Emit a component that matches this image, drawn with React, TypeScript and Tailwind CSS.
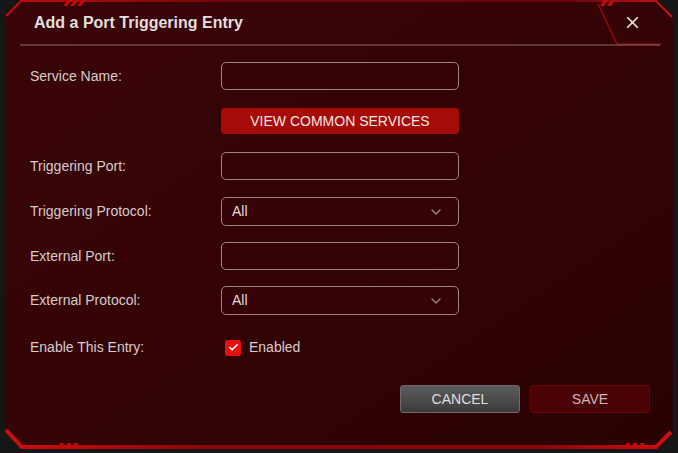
import React from 'react';
import { X, ChevronDown, Check } from 'lucide-react';

const Frame: React.FC = () => (
  <svg className="absolute inset-0 pointer-events-none" width="678" height="453" viewBox="0 0 678 453">
    <defs>
      <linearGradient id="panelBg" x1="0" y1="0" x2="1" y2="1">
        <stop offset="0" stopColor="#3a0407" />
        <stop offset="0.6" stopColor="#320305" />
        <stop offset="1" stopColor="#2a0204" />
      </linearGradient>
      <linearGradient id="topEdge" x1="0" y1="0" x2="1" y2="0">
        <stop offset="0" stopColor="#c20c0c" />
        <stop offset="0.35" stopColor="#6a0608" />
        <stop offset="0.85" stopColor="#6a0608" />
        <stop offset="1" stopColor="#d01010" />
      </linearGradient>
      <linearGradient id="botEdge" x1="0" y1="0" x2="1" y2="0">
        <stop offset="0" stopColor="#d00e0e" />
        <stop offset="0.3" stopColor="#8a0709" />
        <stop offset="0.8" stopColor="#8a0709" />
        <stop offset="1" stopColor="#d00e0e" />
      </linearGradient>
      <linearGradient id="sideEdge" x1="0" y1="0" x2="0" y2="1">
        <stop offset="0" stopColor="#5a0507" />
        <stop offset="0.8" stopColor="#5a0507" />
        <stop offset="1" stopColor="#c00c0c" />
      </linearGradient>
    </defs>
    <polygon points="20,0 656,0 673,17 673,432 657,449 22,449 5,432 5,15" fill="url(#panelBg)" />
    {/* side edges */}
    <line x1="6" y1="16" x2="6" y2="432" stroke="url(#sideEdge)" strokeWidth="2" />
    <line x1="672" y1="17" x2="672" y2="432" stroke="url(#sideEdge)" strokeWidth="2" />
    {/* top edge */}
    <polyline points="6,16 21,1 656,1 672,17" fill="none" stroke="url(#topEdge)" strokeWidth="2" />
    {/* bottom edge */}
    <polyline points="6,430 22,447 656,447 671,432" fill="none" stroke="url(#botEdge)" strokeWidth="4" />
    {/* stripes */}
    <g fill="#c20c0c">
      <polygon points="63,6 67,6 72,0 68,0" />
      <polygon points="70,6 74,6 79,0 75,0" />
      <polygon points="77,6 81,6 86,0 82,0" />
      <polygon points="64,449 68,449 63,443 59,443" />
      <polygon points="71,449 75,449 70,443 66,443" />
      <polygon points="78,449 82,449 77,443 73,443" />
      <polygon points="622,449 626,449 631,443 627,443" />
      <polygon points="629,449 633,449 638,443 634,443" />
      <polygon points="636,449 640,449 645,443 641,443" />
      <polygon points="600,6 604,6 608,0 604,0" />
      <polygon points="607,6 611,6 615,0 611,0" />
    </g>
    {/* close tab */}
    <polyline points="598,4 617,44 662,44" fill="none" stroke="#b00a0a" strokeWidth="1.2" />
    <line x1="20" y1="45" x2="617" y2="45" stroke="#8c6464" strokeWidth="1" />
    <line x1="617" y1="45" x2="660" y2="45" stroke="#9a7070" strokeWidth="1" />
  </svg>
);

const Field: React.FC<{ label: string; children: React.ReactNode; mt: string }> = ({ label, children, mt }) => (
  <div className={`flex items-center ${mt}`}>
    <div className="w-[191px] text-[14px] text-[#d6cccc]">{label}</div>
    {children}
  </div>
);

const TextBox: React.FC = () => (
  <div className="w-[238px] h-[28px] rounded-[5px] border border-[#9c8484] bg-[#350305]" />
);

const Select: React.FC = () => (
  <div className="w-[238px] h-[29px] rounded-[5px] border border-[#9c8484] bg-[#350305] flex items-center justify-between pl-[10px] pr-[14px]">
    <span className="text-[14px] text-[#e2dada]">All</span>
    <ChevronDown size={16} strokeWidth={2} className="text-[#9a8a8a]" />
  </div>
);

export default function App() {
  return (
    <div
      className="relative w-[678px] h-[453px] bg-[#161616] overflow-hidden"
      style={{ fontFamily: '"Liberation Sans", Arial, sans-serif' }}
    >
      <Frame />
      <div className="relative flex flex-col">
        {/* Header */}
        <div className="h-[45px] flex items-center justify-between pl-[34px] pr-[36px]">
          <h1 className="text-[16px] font-bold text-[#e4dede]">Add a Port Triggering Entry</h1>
          <X size={19} strokeWidth={2.2} className="text-[#ece6e6]" />
        </div>

        {/* Form */}
        <div className="flex flex-col pl-[30px]">
          <Field label="Service Name:" mt="mt-[17px]">
            <TextBox />
          </Field>
          <div className="flex mt-[18px]">
            <div className="w-[191px]" />
            <button className="w-[238px] h-[26px] rounded-[4px] bg-[#a50c07] text-[14px] text-[#f2e6e6]">
              VIEW COMMON SERVICES
            </button>
          </div>
          <Field label="Triggering Port:" mt="mt-[18px]">
            <TextBox />
          </Field>
          <Field label="Triggering Protocol:" mt="mt-[17px]">
            <Select />
          </Field>
          <Field label="External Port:" mt="mt-[16px]">
            <TextBox />
          </Field>
          <Field label="External Protocol:" mt="mt-[16px]">
            <Select />
          </Field>
          <Field label="Enable This Entry:" mt="mt-[22px]">
            <div className="flex items-center gap-[8px] pl-[4px]">
              <span className="w-[16px] h-[16px] rounded-[3px] bg-[#e8100c] flex items-center justify-center">
                <Check size={11} strokeWidth={3.5} className="text-white" />
              </span>
              <span className="text-[14px] text-[#d6cccc]">Enabled</span>
            </div>
          </Field>
        </div>

        {/* Actions */}
        <div className="flex justify-end gap-[10px] pr-[28px] mt-[27px]">
          <button className="w-[120px] h-[28px] rounded-[3px] bg-gradient-to-b from-[#5c5c5c] to-[#3c3c3c] border border-[#6a6a6a] text-[14px] text-[#e2dddd]">
            CANCEL
          </button>
          <button className="w-[120px] h-[28px] rounded-[3px] bg-[#4a0204] border border-[#6a0406] text-[14px] text-[#c8b4bc]">
            SAVE
          </button>
        </div>
      </div>
    </div>
  );
}
